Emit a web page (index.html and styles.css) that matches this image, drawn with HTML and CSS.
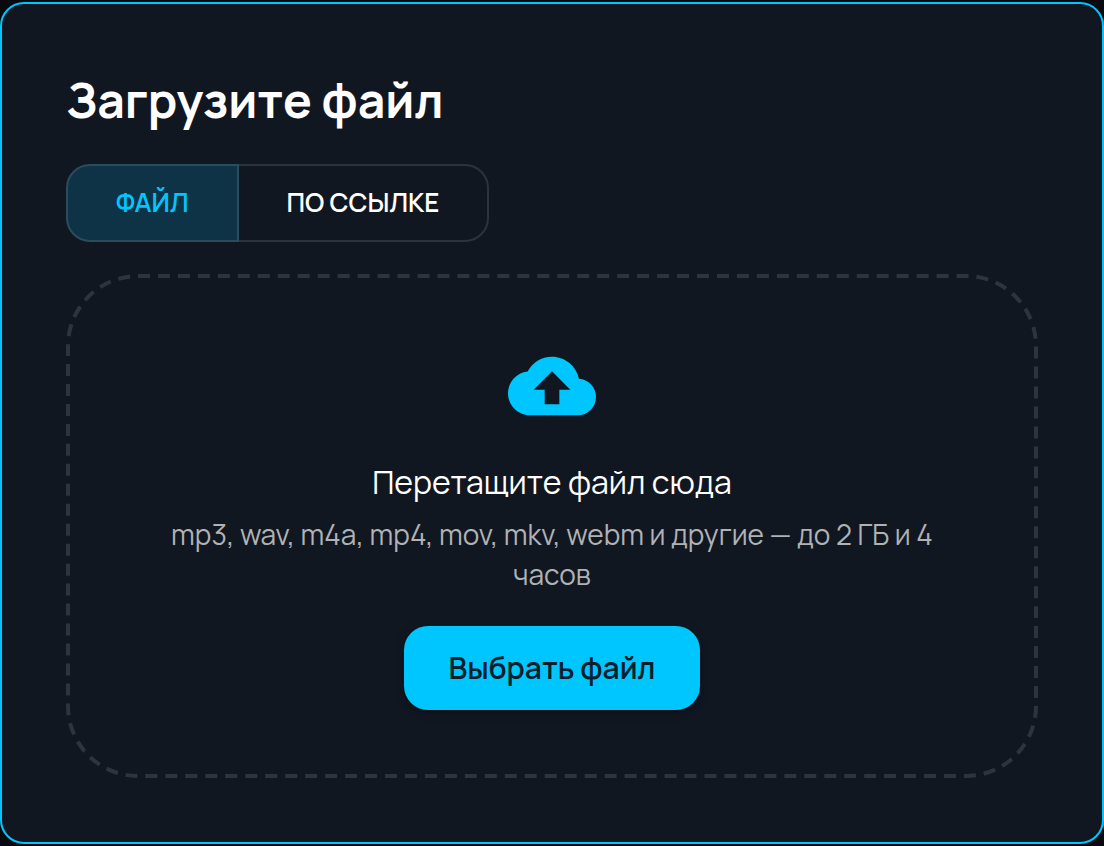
FILE: index.html
```html
<!DOCTYPE html>
<html lang="ru">
<head>
<meta charset="UTF-8">
<meta name="viewport" content="width=device-width, initial-scale=1.0">
<title>Загрузите файл</title>
<link rel="stylesheet" href="styles.css">
</head>
<body>

<main class="card">
    <h1 class="title">Загрузите файл</h1>

    <div class="tabs">
        <button type="button" class="tab active" aria-pressed="true">ФАЙЛ</button>
        <button type="button" class="tab" aria-pressed="false">ПО ССЫЛКЕ</button>
    </div>

    <div class="dropzone">
        <svg class="outline" aria-hidden="true">
            <rect class="outline-rect" pathLength="2820"/>
        </svg>
        <svg class="cloud" viewBox="0 0 24 24" aria-hidden="true">
            <path d="M19.35 10.04C18.67 6.59 15.64 4 12 4 9.11 4 6.6 5.64 5.35 8.04 2.34 8.36 0 10.91 0 14c0 3.31 2.69 6 6 6h13c2.76 0 5-2.24 5-5 0-2.64-2.05-4.78-4.65-4.96zM14 13v4h-4v-4H7l5-5 5 5h-3z"/>
        </svg>
        <p class="drop-title">Перетащите файл сюда</p>
        <p class="drop-hint">mp3, wav, m4a, mp4, mov, mkv, webm и другие — до 2 ГБ и 4 часов</p>
        <button type="button" class="choose-btn">Выбрать файл</button>
    </div>
</main>

</body>
</html>
```
FILE: styles.css
```css
*{
    box-sizing:border-box;
    font-family:Manrope, Inter, sans-serif;
}

body{
    margin:0;
    padding:2px 0;
    background:#080a10;
    color:#fff;
}

.card{
    padding:64px;
    border:2px solid #00c6ff;
    border-radius:24px;
    background:#111721;
}

.title{
    margin:0 0 32px;
    font-size:48px;
    line-height:64px;
    font-weight:700;
}

/* Tabs */
.tabs{
    display:flex;
    margin-bottom:32px;
}

.tab{
    padding:16px 48px 18px;
    border:2px solid #2e323c;
    border-radius:0 24px 24px 0;
    background:transparent;
    color:#fff;
    font-size:26px;
    line-height:40px;
    font-weight:600;
    cursor:pointer;
}

.tab.active{
    border-color:#2b4c5c;
    border-radius:24px 0 0 24px;
    background:#0f3346;
    color:#00c6ff;
}

.tab + .tab{
    border-left:none;
}

/* Drop area */
.dropzone{
    position:relative;
    display:flex;
    flex-direction:column;
    align-items:center;
    padding:68px;
    text-align:center;
}

/* dashed frame, drawn over the edge of the drop area */
.outline{
    position:absolute;
    top:0;
    left:0;
    width:100%;
    height:100%;
    pointer-events:none;
}

.outline-rect{
    x:2px;
    y:2px;
    width:calc(100% - 4px);
    height:calc(100% - 4px);
    rx:70px;
    fill:none;
    stroke:#2f333d;
    stroke-width:4px;
    stroke-dasharray:12 8;
}

.cloud{
    width:88px;
    height:88px;
    margin-bottom:28px;
    fill:#00c6ff;
}

.drop-title{
    margin:0 0 8px;
    font-size:32px;
    line-height:48px;
    font-weight:400;
}

.drop-hint{
    margin:0 0 32px;
    color:#b0b2b5;
    font-size:28px;
    line-height:40px;
    font-weight:400;
}

.choose-btn{
    padding:20px 45px;
    border:none;
    border-radius:24px;
    background:#00c6ff;
    box-shadow:0 2px 8px rgba(0,0,0,0.4);
    color:#04202b;
    font-size:30px;
    line-height:44px;
    font-weight:600;
    cursor:pointer;
}
```
